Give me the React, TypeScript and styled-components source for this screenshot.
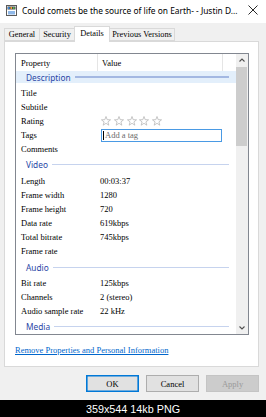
import React from 'react';
import styled, { createGlobalStyle } from 'styled-components';

const UI = `"Noto Sans", "Open Sans", "DejaVu Sans", sans-serif`;
const SERIF = `"Liberation Serif", "Times New Roman", serif`;

const GlobalStyle = createGlobalStyle`
  html, body {
    margin: 0;
    padding: 0;
    background: #000;
  }
  body {
    width: 266px;
    height: 417px;
    overflow: hidden;
  }
  * {
    box-sizing: border-box;
  }
`;

const Frame = styled.div`
  width: 266px;
  height: 417px;
  display: flex;
  flex-direction: column;
  background: #000;
`;

const Window = styled.div`
  height: 400px;
  flex-shrink: 0;
  background: #f0f0f0;
  display: flex;
  flex-direction: column;
`;

const TitleBar = styled.div`
  height: 23px;
  flex-shrink: 0;
  background: #fff;
  display: flex;
  align-items: center;
  gap: 5px;
  padding: 0 8px 3px 6px;
`;

const TitleText = styled.div`
  flex: 1;
  font-family: ${UI};
  font-size: 8.4px;
  color: #000;
  white-space: nowrap;
  overflow: hidden;
`;

const TabStrip = styled.div`
  height: 15px;
  margin-top: 3px;
  padding-left: 4px;
  display: flex;
  align-items: flex-end;
  flex-shrink: 0;
`;

const Tab = styled.div<{ $w: number; $active?: boolean }>`
  width: ${(p) => p.$w}px;
  height: ${(p) => (p.$active ? 16 : 13)}px;
  margin-left: -1px;
  margin-bottom: ${(p) => (p.$active ? -1 : 0)}px;
  position: relative;
  z-index: ${(p) => (p.$active ? 2 : 1)};
  border: 1px solid #d9d9d9;
  border-bottom: ${(p) => (p.$active ? 'none' : '1px solid #d9d9d9')};
  background: ${(p) => (p.$active ? '#fff' : '#f0f0f0')};
  font-family: ${SERIF};
  font-size: 8.3px;
  color: #000;
  display: flex;
  align-items: center;
  justify-content: center;
  padding-bottom: ${(p) => (p.$active ? 2 : 0)}px;
  &:first-child {
    margin-left: 0;
  }
`;

const Panel = styled.div`
  height: 326px;
  margin: 0 7px 0 4px;
  border: 1px solid #d9d9d9;
  background: #fff;
  padding: 11px 10px 0 10px;
  display: flex;
  flex-direction: column;
  flex-shrink: 0;
`;

const ListBox = styled.div`
  width: 234px;
  height: 282px;
  border: 1px solid #828790;
  display: flex;
  background: #fff;
`;

const ListBody = styled.div`
  flex: 1;
  display: flex;
  flex-direction: column;
  overflow: hidden;
`;

const HeaderRow = styled.div`
  height: 17px;
  display: flex;
  flex-shrink: 0;
`;

const HeaderCell = styled.div<{ $w: number; $pad: number }>`
  width: ${(p) => p.$w}px;
  padding-left: ${(p) => p.$pad}px;
  border-right: 1px solid #e5e5e5;
  font-family: ${SERIF};
  font-size: 8.5px;
  color: #000;
  display: flex;
  align-items: center;
`;

const GroupRow = styled.div<{ $h: number; $gap?: number; $active?: boolean }>`
  height: ${(p) => p.$h}px;
  margin-bottom: ${(p) => p.$gap ?? 0}px;
  flex-shrink: 0;
  display: flex;
  align-items: center;
  padding: 0 7px 0 10px;
  background: ${(p) => (p.$active ? '#e3effb' : 'transparent')};
`;

const GroupLabel = styled.span`
  font-family: ${UI};
  font-size: 8.3px;
  color: #2a46a6;
  white-space: nowrap;
`;

const GroupRule = styled.div<{ $active?: boolean }>`
  flex: 1;
  height: ${(p) => (p.$active ? 1.5 : 1)}px;
  margin-left: 4px;
  background: ${(p) => (p.$active ? '#a3b8e2' : '#c6d3ee')};
`;

const ItemRow = styled.div`
  height: 14.2px;
  flex-shrink: 0;
  display: flex;
  align-items: center;
  font-family: ${SERIF};
  font-size: 8.5px;
  color: #000;
`;

const NameCell = styled.div`
  width: 82px;
  padding-left: 5px;
  white-space: nowrap;
`;

const ValueCell = styled.div`
  flex: 1;
  padding-left: 2px;
  display: flex;
  align-items: center;
  white-space: nowrap;
`;

const Stars = styled.div`
  display: flex;
  gap: 2.75px;
  padding-left: 1px;
`;

const TagBox = styled.div`
  width: 121px;
  height: 13px;
  margin-left: 1px;
  border: 1px solid #4a9ae4;
  display: flex;
  align-items: center;
  padding-left: 1px;
  color: #6b6b6b;
`;

const Caret = styled.span`
  width: 1px;
  height: 9px;
  background: #000;
  margin-right: 1px;
`;

const ScrollBar = styled.div`
  width: 12px;
  background: #f0f0f0;
  display: flex;
  flex-direction: column;
`;

const ScrollButton = styled.div`
  height: 12px;
  display: flex;
  align-items: center;
  justify-content: center;
  flex-shrink: 0;
`;

const ScrollTrack = styled.div`
  flex: 1;
  padding: 1px 1px 0 0;
`;

const Thumb = styled.div`
  height: 79px;
  background: #cdcdcd;
`;

const Link = styled.a`
  margin-top: 10px;
  font-family: ${SERIF};
  font-size: 8.5px;
  color: #0066cc;
  text-decoration: underline;
  line-height: 10px;
`;

const ButtonRow = styled.div`
  display: flex;
  justify-content: flex-end;
  gap: 7px;
  padding-right: 7px;
  margin-top: 8px;
`;

const Button = styled.div<{ $variant?: 'default' | 'disabled' }>`
  width: 53px;
  height: 17px;
  display: flex;
  align-items: center;
  justify-content: center;
  font-family: ${SERIF};
  font-size: 8.5px;
  background: ${(p) => (p.$variant === 'disabled' ? '#cccccc' : '#e1e1e1')};
  color: ${(p) => (p.$variant === 'disabled' ? '#9a9a9a' : '#000')};
  border: 1px solid
    ${(p) =>
      p.$variant === 'default' ? '#0078d7' : p.$variant === 'disabled' ? '#c4c4c4' : '#adadad'};
  box-shadow: ${(p) => (p.$variant === 'default' ? 'inset 0 0 0 0.6px #0078d7' : 'none')};
`;

const Caption = styled.div`
  flex: 1;
  display: flex;
  align-items: center;
  justify-content: center;
  font-family: "Liberation Sans", Arial, sans-serif;
  font-size: 10.8px;
  color: #fff;
`;

const FileIcon = () => (
  <svg width="11" height="11" viewBox="0 0 11 11">
    <rect x="0.5" y="0.5" width="10" height="10" fill="#fff" stroke="#5a5a5a" />
    <rect x="1.5" y="1.5" width="8" height="3" fill="#4a4a4a" />
    <rect x="2" y="2" width="1.5" height="2" fill="#3b8be0" />
    <rect x="4.5" y="2" width="1.5" height="2" fill="#f0a030" />
    <rect x="7" y="2" width="1.5" height="2" fill="#56b050" />
    <rect x="2" y="6" width="7" height="3.5" fill="#8fb8e8" />
  </svg>
);

const CloseIcon = () => (
  <svg width="10" height="10" viewBox="0 0 10 10">
    <path d="M0.5 0.5 L9.5 9.5 M9.5 0.5 L0.5 9.5" stroke="#111" strokeWidth="0.9" />
  </svg>
);

const Star = () => (
  <svg width="10" height="10" viewBox="0 0 10 10">
    <polygon
      points="5,0.5 6.18,3.68 9.56,3.82 6.9,5.92 7.82,9.18 5,7.3 2.18,9.18 3.1,5.92 0.44,3.82 3.82,3.68"
      fill="#fff"
      stroke="#b8b8b8"
      strokeWidth="0.8"
      strokeLinejoin="round"
    />
  </svg>
);

const Chevron = ({ up }: { up?: boolean }) => (
  <svg width="6" height="4" viewBox="0 0 6 4">
    <path
      d={up ? 'M0.5 3.5 L3 1 L5.5 3.5' : 'M0.5 0.5 L3 3 L5.5 0.5'}
      fill="none"
      stroke="#505050"
      strokeWidth="1.1"
    />
  </svg>
);

type Item = { name: string; value?: React.ReactNode };
type Group = { title: string; height: number; gap?: number; active?: boolean; items: Item[] };

const groups: Group[] = [
  {
    title: 'Description',
    height: 12,
    gap: 2.5,
    active: true,
    items: [
      { name: 'Title' },
      { name: 'Subtitle' },
      {
        name: 'Rating',
        value: (
          <Stars>
            {[0, 1, 2, 3, 4].map((i) => (
              <Star key={i} />
            ))}
          </Stars>
        ),
      },
      {
        name: 'Tags',
        value: (
          <TagBox>
            <Caret />
            Add a tag
          </TagBox>
        ),
      },
      { name: 'Comments' },
    ],
  },
  {
    title: 'Video',
    height: 17,
    items: [
      { name: 'Length', value: '00:03:37' },
      { name: 'Frame width', value: '1280' },
      { name: 'Frame height', value: '720' },
      { name: 'Data rate', value: '619kbps' },
      { name: 'Total bitrate', value: '745kbps' },
      { name: 'Frame rate' },
    ],
  },
  {
    title: 'Audio',
    height: 17,
    items: [
      { name: 'Bit rate', value: '125kbps' },
      { name: 'Channels', value: '2 (stereo)' },
      { name: 'Audio sample rate', value: '22 kHz' },
    ],
  },
  { title: 'Media', height: 17, items: [] },
];

const tabs = [
  { label: 'General', w: 36 },
  { label: 'Security', w: 36 },
  { label: 'Details', w: 36, active: true },
  { label: 'Previous Versions', w: 66 },
];

export default function App() {
  return (
    <Frame>
      <GlobalStyle />
      <Window>
        <TitleBar>
          <FileIcon />
          <TitleText>Could comets be the source of life on Earth- - Justin D...</TitleText>
          <CloseIcon />
        </TitleBar>

        <TabStrip>
          {tabs.map((t) => (
            <Tab key={t.label} $w={t.w} $active={t.active}>
              {t.label}
            </Tab>
          ))}
        </TabStrip>

        <Panel>
          <ListBox>
            <ListBody>
              <HeaderRow>
                <HeaderCell $w={82} $pad={5}>
                  Property
                </HeaderCell>
                <HeaderCell $w={125} $pad={4}>
                  Value
                </HeaderCell>
              </HeaderRow>
              {groups.map((g) => (
                <React.Fragment key={g.title}>
                  <GroupRow $h={g.height} $gap={g.gap} $active={g.active}>
                    <GroupLabel>{g.title}</GroupLabel>
                    <GroupRule $active={g.active} />
                  </GroupRow>
                  {g.items.map((it) => (
                    <ItemRow key={it.name}>
                      <NameCell>{it.name}</NameCell>
                      <ValueCell>{it.value}</ValueCell>
                    </ItemRow>
                  ))}
                </React.Fragment>
              ))}
            </ListBody>
            <ScrollBar>
              <ScrollButton>
                <Chevron up />
              </ScrollButton>
              <ScrollTrack>
                <Thumb />
              </ScrollTrack>
              <ScrollButton>
                <Chevron />
              </ScrollButton>
            </ScrollBar>
          </ListBox>
          <Link>Remove Properties and Personal Information</Link>
        </Panel>

        <ButtonRow>
          <Button $variant="default">OK</Button>
          <Button>Cancel</Button>
          <Button $variant="disabled">Apply</Button>
        </ButtonRow>
      </Window>
      <Caption>359x544 14kb PNG</Caption>
    </Frame>
  );
}
